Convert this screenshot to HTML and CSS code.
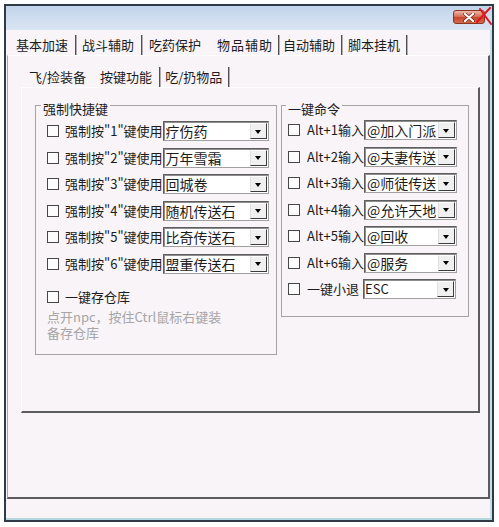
FILE: index.html
```html
<!DOCTYPE html>
<html lang="zh-CN">
<head>
<meta charset="utf-8">
<title>物品辅助</title>
<link rel="stylesheet" href="styles.css">
</head>
<body>
<div class="window">
  <div class="titlebar">
    <div class="close">
      <svg class="close-x" width="12" height="9" viewBox="0 0 12 9"><path d="M2 1 L10 8 M10 1 L2 8" stroke="#6a2018" stroke-width="3.4" stroke-linecap="round"/><path d="M2 1 L10 8 M10 1 L2 8" stroke="#ffffff" stroke-width="2.2" stroke-linecap="round"/></svg>
      <svg class="mark" width="16" height="19" viewBox="0 0 16 19"><path d="M1 15 L14 1 M4 2 L15 17" stroke="#e3141e" stroke-width="2" stroke-linecap="round"/></svg>
    </div>
  </div>

  <div class="tabs">
    <span class="tab t1">基本加速</span><span class="sep s1"></span>
    <span class="tab t2">战斗辅助</span><span class="sep s2"></span>
    <span class="tab t3">吃药保护</span>
    <span class="tab t4">物品辅助</span><span class="sep s4"></span>
    <span class="tab t5">自动辅助</span><span class="sep s5"></span>
    <span class="tab t6">脚本挂机</span><span class="sep s6"></span>
  </div>

  <div class="panel">
    <div class="subtabs">
      <span class="tab st1">飞/捡装备</span>
      <span class="tab st2">按键功能</span><span class="sep ss2"></span>
      <span class="tab st3">吃/扔物品</span><span class="sep ss3"></span>
    </div>

    <div class="subpanel">
      <div class="gb gb1">
        <div class="gb-title">强制快捷键</div>
        <div class="rows">
          <div class="row"><span class="cb"></span><span class="lbl">强制按"1"键使用</span><div class="combo"><span class="val">疗伤药</span><span class="btn"></span></div></div>
          <div class="row"><span class="cb"></span><span class="lbl">强制按"2"键使用</span><div class="combo"><span class="val">万年雪霜</span><span class="btn"></span></div></div>
          <div class="row"><span class="cb"></span><span class="lbl">强制按"3"键使用</span><div class="combo"><span class="val">回城卷</span><span class="btn"></span></div></div>
          <div class="row"><span class="cb"></span><span class="lbl">强制按"4"键使用</span><div class="combo"><span class="val">随机传送石</span><span class="btn"></span></div></div>
          <div class="row"><span class="cb"></span><span class="lbl">强制按"5"键使用</span><div class="combo"><span class="val">比奇传送石</span><span class="btn"></span></div></div>
          <div class="row"><span class="cb"></span><span class="lbl">强制按"6"键使用</span><div class="combo"><span class="val">盟重传送石</span><span class="btn"></span></div></div>
        </div>
        <div class="row single"><span class="cb"></span><span class="lbl">一键存仓库</span></div>
        <p class="hint">点开npc，按住Ctrl鼠标右键装备存仓库</p>
      </div>

      <div class="gb gb2">
        <div class="gb-title">一键命令</div>
        <div class="rows">
          <div class="row"><span class="cb"></span><span class="lbl">Alt+1输入</span><div class="combo"><span class="val">@加入门派</span><span class="btn"></span></div></div>
          <div class="row"><span class="cb"></span><span class="lbl">Alt+2输入</span><div class="combo"><span class="val">@夫妻传送</span><span class="btn"></span></div></div>
          <div class="row"><span class="cb"></span><span class="lbl">Alt+3输入</span><div class="combo"><span class="val">@师徒传送</span><span class="btn"></span></div></div>
          <div class="row"><span class="cb"></span><span class="lbl">Alt+4输入</span><div class="combo"><span class="val">@允许天地合一</span><span class="btn"></span></div></div>
          <div class="row"><span class="cb"></span><span class="lbl">Alt+5输入</span><div class="combo"><span class="val">@回收</span><span class="btn"></span></div></div>
          <div class="row"><span class="cb"></span><span class="lbl">Alt+6输入</span><div class="combo"><span class="val">@服务</span><span class="btn"></span></div></div>
          <div class="row"><span class="cb"></span><span class="lbl">一键小退</span><div class="combo"><span class="val esc">ESC</span><span class="btn"></span></div></div>
        </div>
      </div>
    </div>
  </div>
</div>
</body>
</html>
```

FILE: styles.css
```css
* { box-sizing: border-box; }

html, body {
  margin: 0;
  background: #ffffff;
}

body {
  font-family: "Noto Sans CJK SC", "Noto Sans", sans-serif;
  font-size: 13px;
  color: #1c1c1c;
}

.window {
  margin: 4px 0 0 4px;
  width: 490px;
  height: 518px;
  border: 2px solid #2f3b46;
  background: #f8f4f8;
  display: flex;
  flex-direction: column;
  box-shadow: inset 0 -2px 0 #b4d6de, inset -2px 0 0 #c4dfe5;
}

/* title bar */
.titlebar {
  height: 24px;
  flex: none;
  background: linear-gradient(#c2d4eb, #dae5f3);
  display: flex;
  justify-content: flex-end;
  align-items: flex-start;
  padding: 4px 7px 0 0;
}

.close {
  position: relative;
  width: 32px;
  height: 14px;
  border: 1px solid #8a3424;
  border-radius: 3px;
  background: linear-gradient(#eab8a8, #d8735c 45%, #c4472e 55%, #d46a4c);
  display: flex;
  align-items: center;
  justify-content: center;
}

.mark {
  position: absolute;
  right: -8px;
  top: -4px;
}

/* tabs */
.tabs, .subtabs {
  display: flex;
  align-items: stretch;
  height: 20px;
  line-height: 20px;
  white-space: nowrap;
  flex: none;
}

.tabs {
  margin-top: 5px;
  padding-left: 10px;
}

.sep {
  width: 2px;
  border-left: 1px solid #505050;
  border-right: 1px solid #b0b0b0;
}

.t2 { margin-left: 5px; }
.t3 { margin-left: 6px; }
.t4 { margin-left: 16px; letter-spacing: 1px; }
.t5 { margin-left: 3px; }
.t6 { margin-left: 5px; }
.s1, .s2 { margin-left: 7px; }
.s4 { margin-left: 5px; }
.s5, .s6 { margin-left: 6px; }

/* outer tab page */
.panel {
  height: 444px;
  flex: none;
  margin: 0 2px 0 1px;
  border-top: 1px solid #ffffff;
  border-left: 1px solid #a8a8a8;
  border-right: 2px solid #5c5c5c;
  border-bottom: 2px solid #5c5c5c;
}

.subtabs {
  margin-top: 11px;
  padding-left: 21px;
}

.st2 { margin-left: 14px; }
.ss2 { margin-left: 7px; }
.st3 { margin-left: 4px; }
.ss3 { margin-left: 6px; }

/* inner tab page */
.subpanel {
  margin-left: 13px;
  width: 459px;
  height: 326px;
  border-top: 1px solid #ffffff;
  border-left: 1px solid #ffffff;
  border-right: 2px solid #5c5c5c;
  border-bottom: 2px solid #5c5c5c;
  display: flex;
  align-items: flex-start;
  padding: 17px 0 0 13px;
}

/* group boxes */
.gb {
  border: 1px solid #a4a4a4;
  flex: none;
}

.gb1 { width: 242px; height: 250px; }
.gb2 { width: 188px; height: 212px; margin-left: 4px; }

.gb-title {
  width: fit-content;
  margin: -5px 0 0 5px;
  padding: 0 2px;
  line-height: 16px;
  background: #f8f4f8;
}

.gb2 .gb-title { margin-left: 4px; }

.rows {
  display: flex;
  flex-direction: column;
  gap: 6.5px;
  margin-top: 4px;
  padding-left: 11px;
}

.gb2 .rows {
  margin-top: 3px;
  padding-left: 6px;
}

.row {
  display: flex;
  align-items: center;
  height: 20px;
}

.cb {
  flex: none;
  width: 12px;
  height: 12px;
  border: 1px solid #474747;
  background: #fcfcfc;
}

.lbl {
  flex: 1;
  margin-left: 6px;
  white-space: nowrap;
  line-height: 20px;
}

.gb2 .lbl { margin-left: 7px; }

.combo {
  flex: none;
  width: 106px;
  height: 20px;
  margin-right: 8px;
  display: flex;
  border: 1px solid;
  border-color: #5e5e5e #a0a0a0 #a0a0a0 #5e5e5e;
  box-shadow: inset 1px 1px 0 #8e8e8e;
  background: #ffffff;
}

.gb2 .combo {
  width: 93px;
  margin-right: 12px;
}

.val {
  flex: 1;
  min-width: 0;
  overflow: hidden;
  white-space: nowrap;
  padding-left: 2px;
  font-size: 14px;
  line-height: 18px;
}

.val.esc { font-size: 13px; padding-left: 1px; }

.btn {
  flex: none;
  width: 17px;
  margin: 1px;
  background: #f0f0f0;
  border: 1px solid;
  border-color: #ffffff #3c3c3c #3c3c3c #e0e0e0;
  display: flex;
  align-items: center;
  justify-content: center;
}

.btn::after {
  content: "";
  border-top: 4px solid #000000;
  border-left: 3.5px solid transparent;
  border-right: 3.5px solid transparent;
  margin-top: 1px;
}

.single {
  margin-top: 13.5px;
  padding-left: 11px;
}

.hint {
  margin: 2px 0 0 11px;
  width: 182px;
  line-height: 16px;
  color: #a6a6a6;
}
```
